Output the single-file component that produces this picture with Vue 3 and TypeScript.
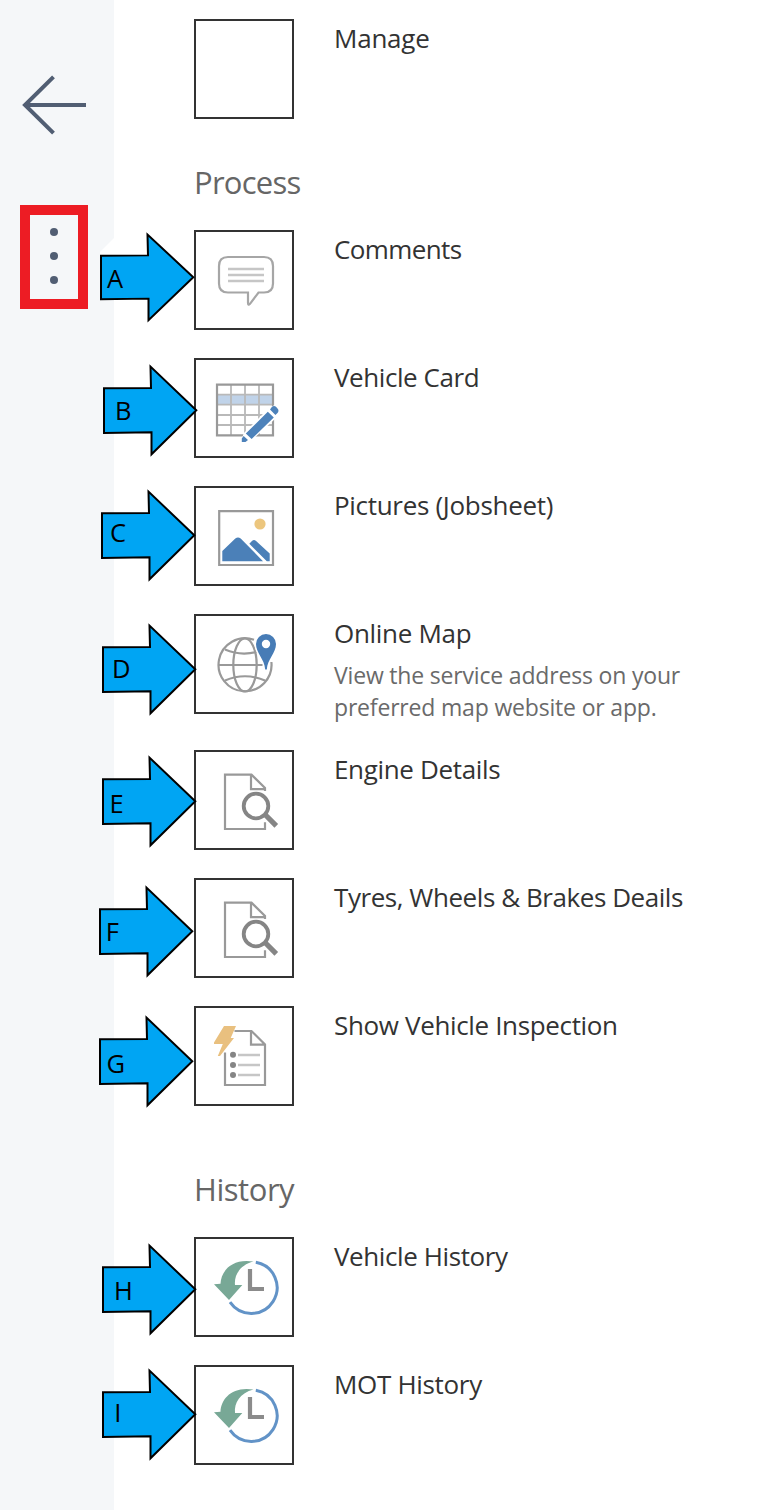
<script setup lang="ts">
type IconName = 'none' | 'comments' | 'table' | 'picture' | 'globe' | 'search' | 'inspection' | 'history'

interface Marker {
  letter: string
  x: number // left edge of the arrow, relative to the tile
  y: number // top of the arrow head, relative to the tile
  textX: number
  textY: number
  scale?: number
  patch?: boolean
}

interface Item {
  title: string
  icon: IconName
  spacing: number
  note?: string[]
  marker?: Marker
}

interface Group {
  id: string
  heading?: string
  items: Item[]
}

const groups: Group[] = [
  { id: 'general', items: [{ title: 'Manage', icon: 'none', spacing: -0.22 }] },
  {
    id: 'process',
    heading: 'Process',
    items: [
      { title: 'Comments', icon: 'comments', spacing: -0.62, marker: { letter: 'A', x: -93, y: 4, textX: 6, textY: 53.7, scale: 0.975, patch: true } },
      { title: 'Vehicle Card', icon: 'table', spacing: -0.42, marker: { letter: 'B', x: -90, y: 8, textX: 11, textY: 53.7 } },
      { title: 'Pictures (Jobsheet)', icon: 'picture', spacing: -0.31, marker: { letter: 'C', x: -92, y: 5.3, textX: 8, textY: 51 } },
      {
        title: 'Online Map',
        icon: 'globe',
        spacing: -0.3,
        note: ['View the service address on your', 'preferred map website or app.'],
        marker: { letter: 'D', x: -91, y: 11.3, textX: 9, textY: 52.7 },
      },
      { title: 'Engine Details', icon: 'search', spacing: -0.34, marker: { letter: 'E', x: -91, y: 7.3, textX: 6.4, textY: 56.4 } },
      { title: 'Tyres, Wheels & Brakes Deails', icon: 'search', spacing: -0.44, marker: { letter: 'F', x: -94, y: 9.3, textX: 5.7, textY: 53.7 } },
      { title: 'Show Vehicle Inspection', icon: 'inspection', spacing: -0.35, marker: { letter: 'G', x: -94, y: 11, textX: 6.5, textY: 55.7 } },
    ],
  },
  {
    id: 'history',
    heading: 'History',
    items: [
      { title: 'Vehicle History', icon: 'history', spacing: -0.4, marker: { letter: 'H', x: -91, y: 8.3, textX: 11, textY: 55.4 } },
      { title: 'MOT History', icon: 'history', spacing: -0.32, marker: { letter: 'I', x: -91, y: 5, textX: 11.2, textY: 51.7 } },
    ],
  },
]
</script>

<template>
  <div class="page">
    <aside class="rail">
      <svg class="back" width="66" height="60" viewBox="0 0 66 60">
        <path d="M64 30H3M31.5 1.8L3 30L31.5 58.2" />
      </svg>
      <div class="more">
        <i v-for="n in 3" :key="n" class="dot" />
      </div>
    </aside>

    <main class="content">
      <section v-for="group in groups" :key="group.id" :class="['group', group.id]">
        <h2 v-if="group.heading" class="heading">{{ group.heading }}</h2>
        <div class="list">
          <div v-for="item in group.items" :key="item.title" class="row">
            <div class="tile">
              <svg v-if="item.icon !== 'none'" class="icon" width="96" height="96" viewBox="2 2 96 96">
                <template v-if="item.icon === 'comments'">
                  <path class="line soft" d="M34 27H70Q79 27 79 36V53.5Q79 62.5 70 62.5H64.5L56 73.8Q54 76 54 73V62.5H34Q25 62.5 25 53.5V36Q25 27 34 27Z" />
                  <path class="pale" d="M34 39H70M34 45H70M34 51H70" />
                </template>
                <template v-else-if="item.icon === 'table'">
                  <rect x="23" y="36.7" width="56" height="10" fill="#c0d3e9" />
                  <path class="grid" d="M23 36.7H79M23 46.7H79M23 57H79M23 67H79M37 27V77M51 27V77M65 27V77" />
                  <path class="line" d="M23 26.7H79V77.3H23Z" />
                  <path d="M49 82L51 76L76 51L80 49L85 53L83 57L58 80Z" fill="#fff" stroke="#fff" stroke-width="3" />
                  <path d="M47.8 84V80.5L49.6 78L54 82L51.5 84ZM51.8 75.6L73.8 53.8L79.8 59.4L57.6 81ZM76 51.4L78 48.8Q80 47.4 82 48.8L83.9 51Q85.2 53 83.5 55L81.4 57Z" fill="#4d82ba" />
                </template>
                <template v-else-if="item.icon === 'picture'">
                  <path class="line" d="M25.2 25.2H79V79H25.2Z" />
                  <circle cx="66" cy="38" r="5.6" fill="#ecc67e" />
                  <path d="M28.3 75.3V65L41.3 52.4Q44 50.5 46.7 52.4L69 75.3ZM55.3 57.8L58.2 54.8Q60 53.3 61.8 54.8L75.7 67.5V75.3H72.8Z" fill="#4b80b8" />
                </template>
                <template v-else-if="item.icon === 'globe'">
                  <g class="line">
                    <path d="M60 25.8A26.5 26.5 0 1 0 77.4 48" />
                    <ellipse cx="51" cy="51" rx="11.7" ry="26.5" />
                    <path d="M25 51H68.5M31 35.5Q46 42 62.5 38M31 66.5Q51 58 71 66.5" />
                  </g>
                  <path d="M70.5 54C70 46 60.5 40 60.5 30A11.5 11.5 0 0 1 83.5 30C83.5 40 74 46 73.5 54Z" fill="#fff" />
                  <path fill-rule="evenodd" d="M71.2 55.5C70.5 45 62 39 62 30A10 10 0 0 1 82 30C82 39 73.5 45 72.8 55.5ZM72 25.8A4.2 4.2 0 1 0 72 34.2A4.2 4.2 0 1 0 72 25.8Z" fill="#477cb6" />
                </template>
                <template v-else-if="item.icon === 'search'">
                  <path class="line" d="M71 72.3V79H31V24.7H57.5L71 38V41M57 24.7V39.2H71" />
                  <circle cx="62" cy="56" r="12.3" fill="#fff" stroke="#858585" stroke-width="3.8" />
                  <path d="M71 64.5L82.3 75.8" stroke="#858585" stroke-width="5.2" />
                </template>
                <template v-else-if="item.icon === 'inspection'">
                  <path class="line" d="M40.5 25H57.5L71 38.5V79H31V46.5M57 25V38.7H71" />
                  <g fill="#858585">
                    <circle cx="39" cy="48.8" r="3" />
                    <circle cx="39" cy="59" r="3" />
                    <circle cx="39" cy="69" r="3" />
                  </g>
                  <path class="pale" d="M44 49H66M44 59H66M44 69H66" />
                  <path d="M30 20H42L36.7 32H40L26 50H23.8L28.8 38H20V36.5Z" fill="#e9c07f" />
                </template>
                <template v-else>
                  <path d="M61.8 25.2A25.8 25.8 0 1 1 36 65.2" fill="none" stroke="#6293c7" stroke-width="3" />
                  <path d="M56 32V52H70" fill="none" stroke="#8b8b8b" stroke-width="4.2" />
                  <path d="M20 47.2L26.5 46.8C27 34 38 21 59.5 24.6C46 28 40 38 41 48H48.3L35 63Z" fill="#78a896" />
                </template>
              </svg>

              <svg
                v-if="item.marker"
                class="marker"
                width="96"
                height="92"
                viewBox="0 0 96 92"
                :style="{ left: `${item.marker.x - 2}px`, top: `${item.marker.y - 2}px` }"
              >
                <path v-if="item.marker.patch" d="M-1 18L13 4V22H-1Z" fill="#fff" />
                <path
                  class="arrow"
                  :transform="`scale(1 ${item.marker.scale ?? 1})`"
                  d="M0 22.3L47 21.9L46.5 0.6L92.3 44.3L47.5 88.3V66.3L0 67Z"
                />
                <text :x="item.marker.textX" :y="item.marker.textY">{{ item.marker.letter }}</text>
              </svg>
            </div>
            <div class="text">
              <div class="title"><span :style="{ letterSpacing: `${item.spacing}px` }">{{ item.title }}</span></div>
              <div v-if="item.note" class="note">
                <div v-for="line in item.note" :key="line">{{ line }}</div>
              </div>
            </div>
          </div>
        </div>
      </section>
    </main>
  </div>
</template>

<style>
body {
  background: #fff;
}
</style>

<style scoped>
.page {
  display: flex;
  width: 780px;
  height: 1510px;
  overflow: hidden;
  background: #fff;
  font-family: 'Open Sans', 'Noto Sans', sans-serif;
}
.rail {
  flex: none;
  box-sizing: border-box;
  width: 114px;
  padding: 75px 0 0 20px;
  background: #f5f7f9;
}
.back {
  display: block;
  margin-left: 2px;
  fill: none;
  stroke: #515e73;
  stroke-width: 4;
}
.more {
  box-sizing: border-box;
  display: flex;
  flex-direction: column;
  align-items: center;
  gap: 16px;
  width: 68px;
  height: 104px;
  margin-top: 70px;
  padding-top: 13px;
  border: 10px solid #ed1c24;
}
.dot {
  width: 8px;
  height: 8px;
  border-radius: 50%;
  background: #515e73;
}
.content {
  flex: 1;
  padding: 19px 0 0 80px;
}
.heading {
  height: 44px;
  margin: 0 0 26px;
  font-size: 31px;
  line-height: 44px;
  font-weight: 400;
  color: #666;
}
.process {
  margin-top: 41px;
}
.process .heading {
  letter-spacing: -0.75px;
}
.history {
  margin-top: 61px;
}
.history .heading {
  letter-spacing: -0.45px;
}
.list {
  display: flex;
  flex-direction: column;
  gap: 28px;
}
.row {
  display: flex;
  gap: 40px;
}
.tile {
  position: relative;
  box-sizing: border-box;
  flex: none;
  width: 100px;
  height: 100px;
  border: 2px solid #333;
}
.icon {
  display: block;
}
.line {
  fill: none;
  stroke: #999;
  stroke-width: 2.2;
}
.soft {
  stroke: #a6a6a6;
}
.grid {
  fill: none;
  stroke: #b9b9b9;
  stroke-width: 1.8;
}
.pale {
  fill: none;
  stroke: #c6c6c6;
  stroke-width: 2.3;
}
.marker {
  position: absolute;
  overflow: visible;
  font-size: 25.5px;
}
.arrow {
  fill: #00a5f3;
  stroke: #000;
  stroke-width: 2;
}
.text {
  white-space: nowrap;
}
.title {
  font-size: 26px;
  line-height: 38px;
  color: #333;
}
.note {
  margin: 7px 0 -1px;
  font-size: 23px;
  line-height: 32px;
  letter-spacing: -0.18px;
  color: #6a6a6a;
}
</style>
